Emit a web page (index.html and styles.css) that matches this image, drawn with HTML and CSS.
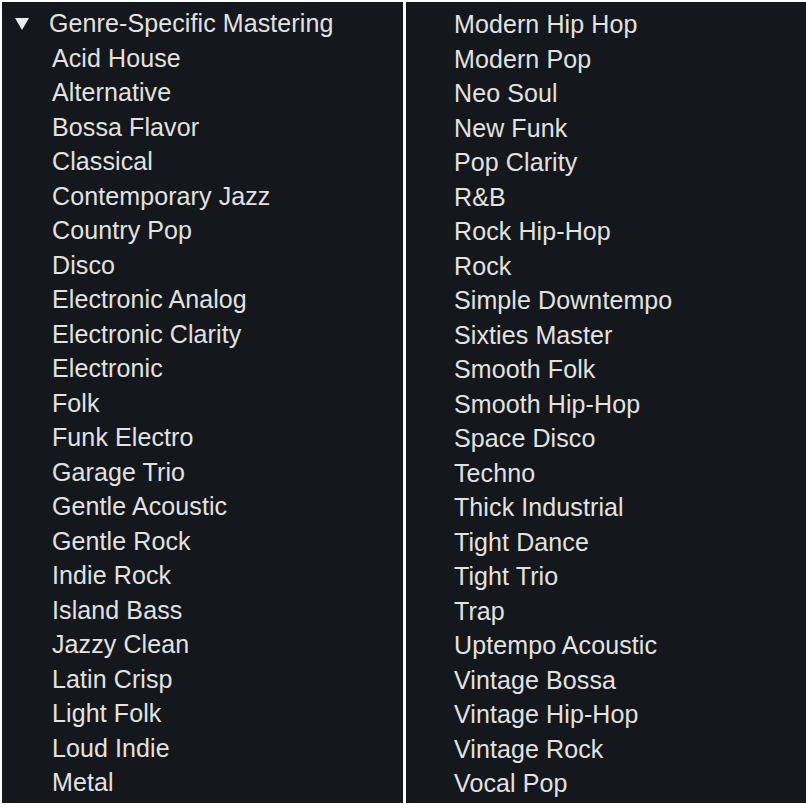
FILE: index.html
```html
<!DOCTYPE html>
<html>
<head>
<meta charset="utf-8">
<link rel="stylesheet" href="styles.css">
</head>
<body>
<div class="frame">
  <div class="panel left">
    <div class="row header">
      <svg class="caret" width="14" height="12" viewBox="0 0 14 12"><polygon points="0,0 14,0 7,12" fill="#ececec"/></svg>
      <span>Genre-Specific Mastering</span>
    </div>
    <div class="row item">Acid House</div>
    <div class="row item">Alternative</div>
    <div class="row item">Bossa Flavor</div>
    <div class="row item">Classical</div>
    <div class="row item">Contemporary Jazz</div>
    <div class="row item">Country Pop</div>
    <div class="row item">Disco</div>
    <div class="row item">Electronic Analog</div>
    <div class="row item">Electronic Clarity</div>
    <div class="row item">Electronic</div>
    <div class="row item">Folk</div>
    <div class="row item">Funk Electro</div>
    <div class="row item">Garage Trio</div>
    <div class="row item">Gentle Acoustic</div>
    <div class="row item">Gentle Rock</div>
    <div class="row item">Indie Rock</div>
    <div class="row item">Island Bass</div>
    <div class="row item">Jazzy Clean</div>
    <div class="row item">Latin Crisp</div>
    <div class="row item">Light Folk</div>
    <div class="row item">Loud Indie</div>
    <div class="row item">Metal</div>
  </div>
  <div class="panel right">
    <div class="row item">Modern Hip Hop</div>
    <div class="row item">Modern Pop</div>
    <div class="row item">Neo Soul</div>
    <div class="row item">New Funk</div>
    <div class="row item">Pop Clarity</div>
    <div class="row item">R&amp;B</div>
    <div class="row item">Rock Hip-Hop</div>
    <div class="row item">Rock</div>
    <div class="row item">Simple Downtempo</div>
    <div class="row item">Sixties Master</div>
    <div class="row item">Smooth Folk</div>
    <div class="row item">Smooth Hip-Hop</div>
    <div class="row item">Space Disco</div>
    <div class="row item">Techno</div>
    <div class="row item">Thick Industrial</div>
    <div class="row item">Tight Dance</div>
    <div class="row item">Tight Trio</div>
    <div class="row item">Trap</div>
    <div class="row item">Uptempo Acoustic</div>
    <div class="row item">Vintage Bossa</div>
    <div class="row item">Vintage Hip-Hop</div>
    <div class="row item">Vintage Rock</div>
    <div class="row item">Vocal Pop</div>
  </div>
</div>
</body>
</html>
```

FILE: styles.css
```css
html, body {
  margin: 0;
  padding: 0;
  background: #ffffff;
}

.frame {
  display: flex;
  gap: 3px;
  padding: 2px 0 5px 2px;
  height: 801px;
}

.panel {
  background: #14171c;
  color: #e2e2e2;
  font-family: "Liberation Sans", Arial, sans-serif;
  font-size: 25px;
  letter-spacing: 0.1px;
  box-sizing: border-box;
}

.left {
  width: 401px;
  padding: 4px 0 0 50px;
}

.right {
  width: 400px;
  padding: 5px 0 0 48px;
}

.row {
  height: 34.5px;
  line-height: 34.5px;
  white-space: nowrap;
}

.header {
  display: flex;
  align-items: center;
  margin-left: -37px;
}

.caret {
  display: block;
  margin-right: 20px;
  margin-top: 2px;
}
```
